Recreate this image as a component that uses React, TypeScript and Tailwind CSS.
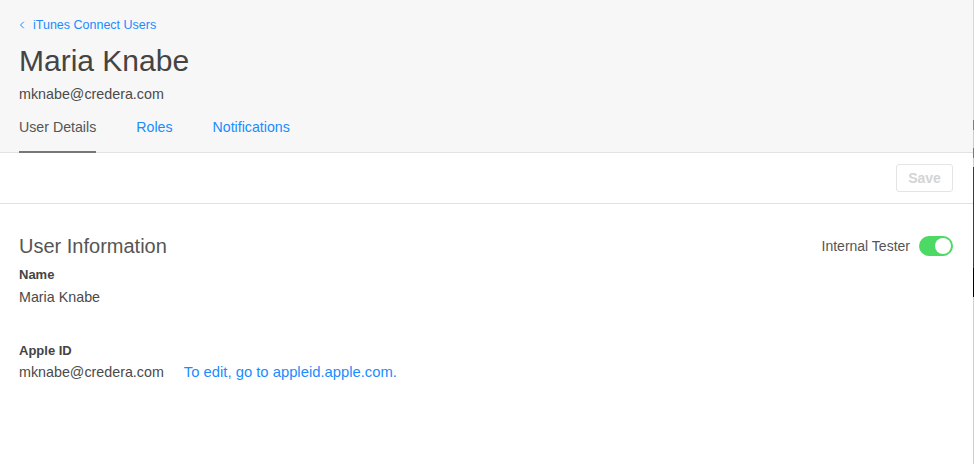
import { ChevronLeft } from 'lucide-react';

export default function App() {
  return (
    <div className="flex w-[974px] h-[464px] bg-white font-['Liberation_Sans',Arial,sans-serif] text-[#4a4a4a] overflow-hidden">
      <div className="flex-1 flex flex-col">
        {/* Header */}
        <header className="bg-[#f7f7f7] border-b border-[#e2e2e2] px-[19px] pt-[17px]">
          <a className="flex items-center gap-[5px] text-[12.5px] leading-[16px] text-[#1a8cff]">
            <ChevronLeft className="w-[12px] h-[12px] -ml-[3px]" strokeWidth={2} />
            iTunes Connect Users
          </a>
          <h1 className="mt-[11px] text-[30px] leading-[34px] text-[#444]">Maria Knabe</h1>
          <p className="mt-[7px] text-[14.3px] leading-[18px] text-[#4a4a4a]">mknabe@credera.com</p>
          <nav className="mt-[15px] flex gap-[40px] text-[14.2px] leading-[18px]">
            <span className="pb-[15px] border-b-2 border-[#777] -mb-px text-[#555]">User Details</span>
            <span className="text-[#1a8cff]">Roles</span>
            <span className="text-[#1a8cff]">Notifications</span>
          </nav>
        </header>

        {/* Toolbar */}
        <div className="h-[51px] border-b border-[#e2e2e2] flex items-center justify-end pr-[20px]">
          <button className="w-[57px] h-[28px] rounded-[3px] border border-[#e4e4e4] text-[14px] font-bold text-[#d4d4d4]">
            Save
          </button>
        </div>

        {/* User information */}
        <section className="px-[19px] pr-[20px] pt-[30px]">
          <div className="flex items-center justify-between">
            <h2 className="text-[20px] leading-[24px] text-[#555]">User Information</h2>
            <div className="flex items-center gap-[9px]">
              <span className="text-[14px] text-[#555]">Internal Tester</span>
              <div className="w-[34px] h-[20px] rounded-full bg-[#4cd964] flex items-center justify-end pr-[2px]">
                <div className="w-[16px] h-[16px] rounded-full bg-white" />
              </div>
            </div>
          </div>

          <div className="mt-[9px]">
            <div className="text-[13px] leading-[16px] font-bold text-[#444]">Name</div>
            <div className="mt-[5px] text-[14.3px] leading-[18px]">Maria Knabe</div>
          </div>

          <div className="mt-[37px]">
            <div className="text-[13px] leading-[16px] font-bold text-[#444]">Apple ID</div>
            <div className="mt-[4px] flex gap-[20px] text-[14.3px] leading-[18px]">
              <span>mknabe@credera.com</span>
              <a className="text-[#1a8cff] text-[14.8px]">To edit, go to appleid.apple.com.</a>
            </div>
          </div>
        </section>
      </div>

      {/* edge of neighbouring window */}
      <div className="w-px flex flex-col">
        <div className="h-[120px] bg-[#d8d8d8]" />
        <div className="h-[10px] bg-[#8a7a6a]" />
        <div className="h-[18px] bg-[#cfcfcf]" />
        <div className="h-[10px] bg-[#777]" />
        <div className="h-[9px] bg-[#cfcfcf]" />
        <div className="h-[101px] bg-[#2a3a6e]" />
        <div className="h-[29px] bg-black" />
        <div className="flex-1 bg-[#cfcfcf]" />
      </div>
    </div>
  );
}
